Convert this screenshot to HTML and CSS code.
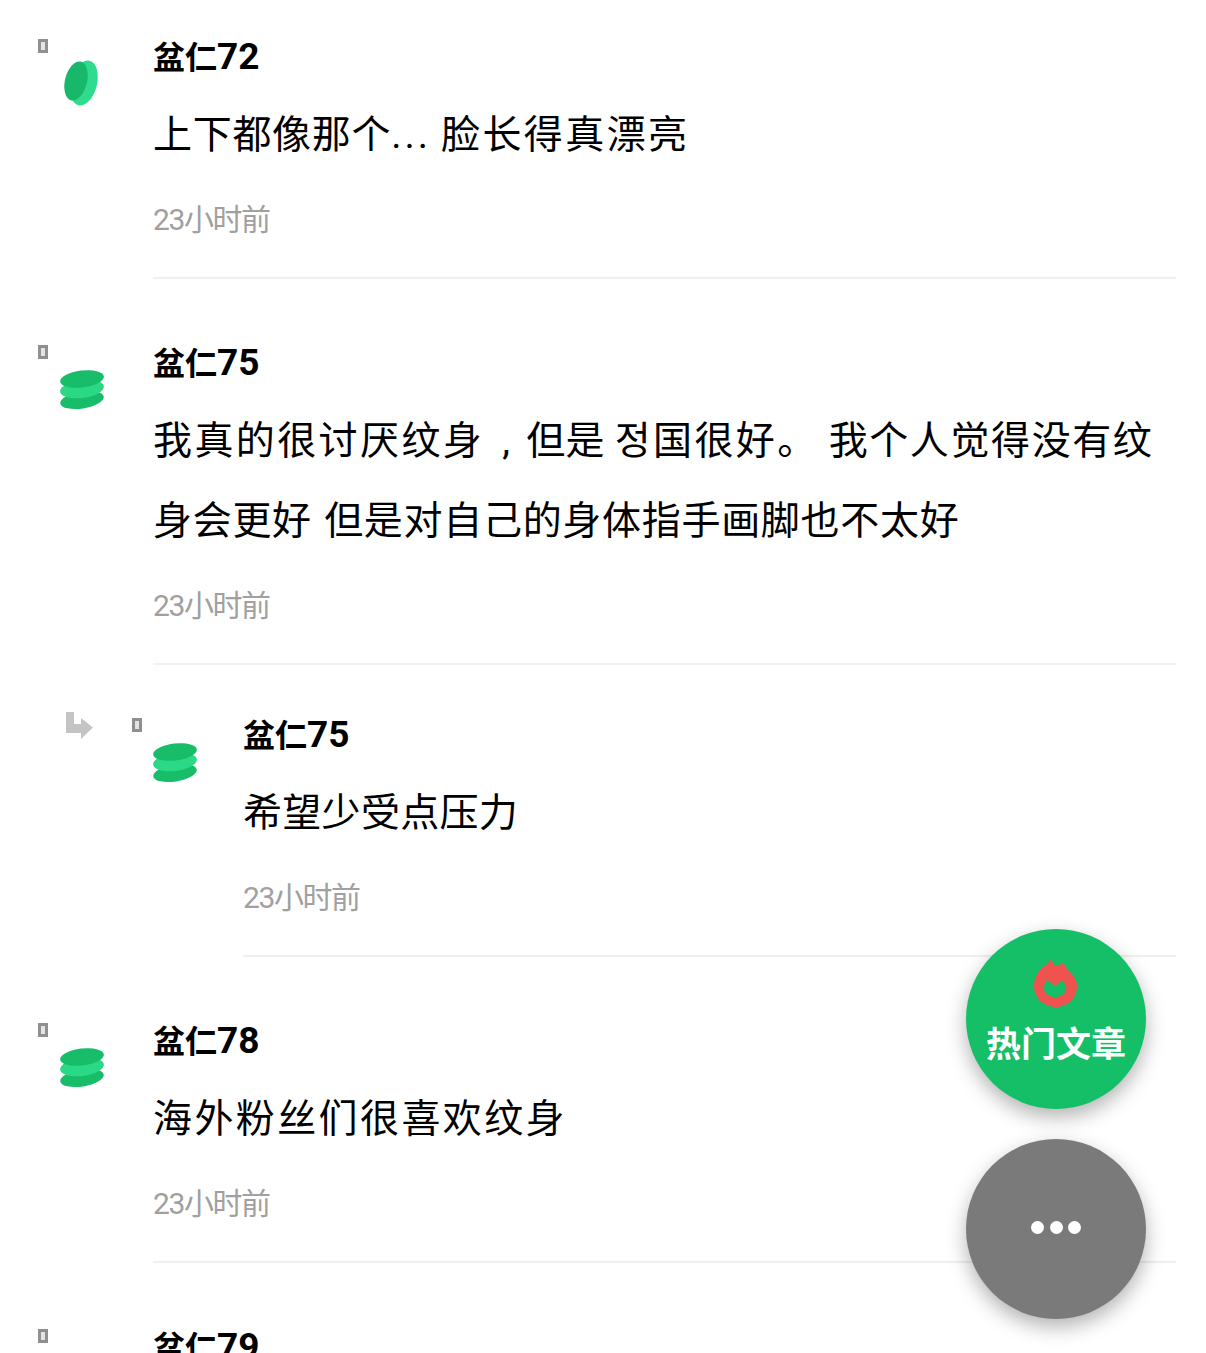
FILE: index.html
```html
<!DOCTYPE html>
<html lang="zh-CN">
  <head>
    <meta charset="UTF-8" />
    <meta name="viewport" content="width=device-width, initial-scale=1.0" />
    <title>Comments</title>
    <link rel="stylesheet" href="styles.css">
  </head>
  <body>
    <svg class="defs" width="0" height="0">
      <symbol id="coin" viewBox="0 0 46 56">
        <ellipse cx="24" cy="30" rx="13" ry="23" transform="rotate(14 24 30)" fill="#2fdc8e" />
        <ellipse cx="16" cy="28" rx="11" ry="20" transform="rotate(14 16 28)" fill="#17b869" />
      </symbol>
      <symbol id="stack" viewBox="0 0 46 56">
        <ellipse cx="22" cy="41" rx="22" ry="8.500" transform="rotate(-9 22 41)" fill="#17bd69" />
        <ellipse cx="22" cy="30" rx="22" ry="9" transform="rotate(-7 22 30)" fill="#2ad886" />
        <ellipse cx="22" cy="20" rx="22" ry="8.500" transform="rotate(-7 22 20)" fill="#17bd69" />
      </symbol>
    </svg>

    <div class="comments">
      <div class="comment">
        <div class="side">
          <span class="tofu"></span>
          <svg class="avatar"><use href="#coin" /></svg>
        </div>
        <div class="main">
          <div class="name">盆仁<span class="num">72</span></div>
          <p class="text"><span class="snug">上下都像那个</span><span class="dots">...</span> <span class="wider">脸长得真漂亮</span></p>
          <div class="time">23小时前</div>
        </div>
      </div>

      <div class="comment">
        <div class="side">
          <span class="tofu"></span>
          <svg class="avatar"><use href="#stack" /></svg>
        </div>
        <div class="main">
          <div class="name">盆仁<span class="num">75</span></div>
          <p class="text"><span class="wider">我真的很讨厌纹身</span><span class="comma">,</span>但是 <span class="wider">정国很好。</span> <span class="wide">我个人觉得没有纹</span><span class="snug">身会更好 但是对自己的身体指手画脚也不太好</span></p>
          <div class="time">23小时前</div>
        </div>
      </div>

      <div class="comment reply">
        <svg class="reply-arrow" width="28" height="27" viewBox="0 0 28 27">
          <path d="M1 0h8v12h7V6l12 9.500L16 27v-6H1z" fill="#c4c4c4" />
        </svg>
        <div class="side">
          <span class="tofu"></span>
          <svg class="avatar"><use href="#stack" /></svg>
        </div>
        <div class="main">
          <div class="name">盆仁<span class="num">75</span></div>
          <p class="text">希望少受点压力</p>
          <div class="time">23小时前</div>
        </div>
      </div>

      <div class="comment">
        <div class="side">
          <span class="tofu"></span>
          <svg class="avatar"><use href="#stack" /></svg>
        </div>
        <div class="main">
          <div class="name">盆仁<span class="num">78</span></div>
          <p class="text"><span class="wider">海外粉丝们很喜欢纹身</span></p>
          <div class="time">23小时前</div>
        </div>
      </div>

      <div class="comment">
        <div class="side">
          <span class="tofu"></span>
        </div>
        <div class="main">
          <div class="name">盆仁<span class="num">79</span></div>
        </div>
      </div>
    </div>

    <div class="fabs">
      <button class="fab fab-hot">
        <svg class="flame" width="43" height="48" viewBox="0 0 43 48">
          <path d="M17 0C18 3 20 6 22 7C25 6 28 5 30 4C31 8 33 10 36 13C40 17 43 21 43 27C43 39 34 48 22 48C10 48 0 39 0 27C0 19 4 13 8 9C12 6 15 4 17 0z" fill="#f0524f" />
          <path d="M13 21C16 22 18 25 20 27C23 26 25 24 28 21C31 24 33 28 32 31C30 36 26 38 21 38C15 38 10 35 10 29C10 26 11 23 13 21z" fill="#14bf68" />
        </svg>
        <span class="fab-label">热门文章</span>
      </button>
      <button class="fab fab-more">
        <span class="dot"></span>
        <span class="dot"></span>
        <span class="dot"></span>
      </button>
    </div>
  </body>
</html>
```

FILE: styles.css
```css
html,
body {
  margin: 0;
  padding: 0;
  height: 1353px;
  overflow: hidden;
  background: #fff;
}
body {
  position: relative;
  font-family: Roboto, "Noto Sans CJK SC", sans-serif;
  color: #000;
}
.defs {
  position: absolute;
}
.comments {
  margin-top: -27px;
}
.comment {
  display: flex;
  padding-right: 30px;
}
.side {
  flex: none;
  box-sizing: border-box;
  width: 153px;
  padding: 66px 0 0 38px;
}
.tofu {
  display: block;
  box-sizing: border-box;
  width: 10px;
  height: 14px;
  border: 3px solid #8f8f8f;
  background: #e4e4e4;
}
.avatar {
  display: block;
  width: 46px;
  height: 56px;
  margin: 0 0 0 22px;
}
.main {
  flex: 1;
  min-width: 0;
  padding: 64px 0 37px;
  border-bottom: 2px solid #f0f0f0;
}
.name {
  height: 40px;
  font-size: 32px;
  line-height: 40px;
  font-weight: 700;
}
.num {
  font-size: 37px;
}
.text {
  margin: 18px 0 0;
  font-size: 39px;
  line-height: 80px;
  font-weight: 400;
  letter-spacing: 0.3px;
}
.snug {
  letter-spacing: 0.7px;
  word-spacing: 2px;
}
.wide {
  letter-spacing: 1.6px;
}
.wider {
  letter-spacing: 2.4px;
}
.dots {
  letter-spacing: 3px;
}
.comma {
  margin: 0 16px 0 18px;
}
.time {
  margin-top: 25px;
  font-size: 30px;
  line-height: 40px;
  font-weight: 400;
  color: #a0a0a0;
  letter-spacing: -1.4px;
}
.reply .reply-arrow {
  flex: none;
  margin: 47px 0 0 65px;
}
.reply .side {
  width: 150px;
  padding: 53px 0 0 39px;
}
.reply .avatar {
  margin-left: 21px;
}
.reply .main {
  padding-top: 50px;
}
.fabs {
  position: absolute;
  right: 60px;
  top: 929px;
  display: flex;
  flex-direction: column;
  gap: 30px;
}
.fab {
  display: flex;
  flex-direction: column;
  align-items: center;
  justify-content: center;
  width: 180px;
  height: 180px;
  padding: 0;
  border: none;
  border-radius: 50%;
  box-shadow: 0 8px 20px rgba(0, 0, 0, 0.3);
  cursor: pointer;
  font-family: inherit;
}
.fab-hot {
  background-color: #14bf68;
  justify-content: flex-start;
  padding-top: 30px;
  box-sizing: border-box;
}
.flame {
  margin-right: 2px;
}
.fab-label {
  margin-top: 14px;
  font-size: 35px;
  line-height: 50px;
  font-weight: 700;
  color: #fff;
}
.fab-more {
  flex-direction: row;
  gap: 5.5px;
  padding-bottom: 4px;
  box-sizing: border-box;
  background-color: #7a7a7a;
}
.dot {
  width: 13px;
  height: 13px;
  border-radius: 50%;
  background: #fff;
}
```
